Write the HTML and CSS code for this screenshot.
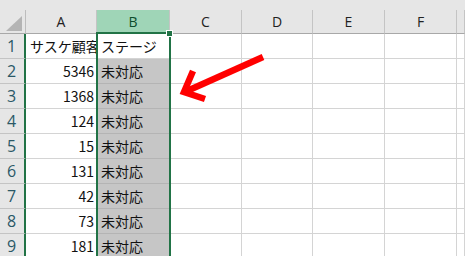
FILE: index.html
```html
<!DOCTYPE html>
<html lang="ja">
<head>
    <meta charset="UTF-8">
    <title>Sheet1</title>
    <link rel="stylesheet" href="styles.css">
</head>
<body>
    <div class="strip"></div>
    <div class="sheet">
        <div class="corner">
            <svg width="26" height="23" viewBox="0 0 26 23"><polygon points="6,21 22,21 22,6" fill="#b4b4b4"/></svg>
        </div>
        <div class="colhead">A</div>
        <div class="colhead sel">B</div>
        <div class="colhead">C</div>
        <div class="colhead">D</div>
        <div class="colhead">E</div>
        <div class="colhead">F</div>
        <div class="colhead"></div>

        <div class="rowhead">1</div>
        <div class="cell clip">サスケ顧客</div>
        <div class="cell active">ステージ</div>
        <div class="cell"></div><div class="cell"></div><div class="cell"></div><div class="cell"></div><div class="cell"></div>

        <div class="rowhead">2</div>
        <div class="cell num">5346</div>
        <div class="cell picked">未対応</div>
        <div class="cell"></div><div class="cell"></div><div class="cell"></div><div class="cell"></div><div class="cell"></div>

        <div class="rowhead">3</div>
        <div class="cell num">1368</div>
        <div class="cell picked">未対応</div>
        <div class="cell"></div><div class="cell"></div><div class="cell"></div><div class="cell"></div><div class="cell"></div>

        <div class="rowhead">4</div>
        <div class="cell num">124</div>
        <div class="cell picked">未対応</div>
        <div class="cell"></div><div class="cell"></div><div class="cell"></div><div class="cell"></div><div class="cell"></div>

        <div class="rowhead">5</div>
        <div class="cell num">15</div>
        <div class="cell picked">未対応</div>
        <div class="cell"></div><div class="cell"></div><div class="cell"></div><div class="cell"></div><div class="cell"></div>

        <div class="rowhead">6</div>
        <div class="cell num">131</div>
        <div class="cell picked">未対応</div>
        <div class="cell"></div><div class="cell"></div><div class="cell"></div><div class="cell"></div><div class="cell"></div>

        <div class="rowhead">7</div>
        <div class="cell num">42</div>
        <div class="cell picked">未対応</div>
        <div class="cell"></div><div class="cell"></div><div class="cell"></div><div class="cell"></div><div class="cell"></div>

        <div class="rowhead">8</div>
        <div class="cell num">73</div>
        <div class="cell picked">未対応</div>
        <div class="cell"></div><div class="cell"></div><div class="cell"></div><div class="cell"></div><div class="cell"></div>

        <div class="rowhead">9</div>
        <div class="cell num">181</div>
        <div class="cell picked">未対応</div>
        <div class="cell"></div><div class="cell"></div><div class="cell"></div><div class="cell"></div><div class="cell"></div>
    </div>

    <!-- column B selection frame -->
    <div class="selection"><div class="handle"></div></div>

    <svg class="arrow" width="465" height="256" viewBox="0 0 465 256">
        <line x1="263" y1="57" x2="187" y2="91" stroke="#ff0000" stroke-width="6.5"/>
        <polyline points="193,71 184,92 205,99" fill="none" stroke="#ff0000" stroke-width="6.5" stroke-linejoin="miter"/>
    </svg>
</body>
</html>
```

FILE: styles.css
```css
body {
    margin: 0;
    width: 465px;
    height: 256px;
    overflow: hidden;
    background: white;
    position: relative;
    font-family: "Noto Sans CJK JP", sans-serif;
    font-size: 14px;
    color: #111;
}
.strip {
    height: 10px;
    background: #e6e6e6;
}
.sheet {
    display: grid;
    grid-template-columns: 26px 71px 73px 72px 71px 72px 72px 1fr;
    grid-template-rows: 24px repeat(9, 25px);
    height: 246px;
    overflow: hidden;
}
.sheet > div {
    box-sizing: border-box;
    overflow: hidden;
    white-space: nowrap;
}
.corner {
    background: #e6e6e6;
    border-right: 1px solid #bdbdbd;
    border-bottom: 1px solid #a8a8a8;
}
.corner svg {
    display: block;
}
.colhead {
    background: #e6e6e6;
    border-right: 1px solid #c4c4c4;
    border-bottom: 1px solid #a8a8a8;
    font-family: "Open Sans", sans-serif;
    font-size: 14px;
    color: #222;
    text-align: center;
    line-height: 23px;
}
.colhead.sel {
    background: #9fd5b7;
    color: #0e4d2c;
}
.rowhead {
    background: #e6e6e6;
    border-right: 2px solid #217346;
    border-bottom: 1px solid #c4c4c4;
    font-family: "Open Sans", sans-serif;
    font-size: 16px;
    color: #2a5866;
    text-align: center;
    line-height: 25px;
    padding-right: 1px;
}
.cell {
    border-right: 1px solid #d4d4d4;
    border-bottom: 1px solid #d4d4d4;
    line-height: 25px;
    padding: 0 3px 0 4px;
}
.cell.num {
    text-align: right;
    padding-right: 2px;
}
.cell.clip {
    padding-left: 4px;
}
.cell.picked {
    background: #c6c6c6;
    border-bottom-color: #b4b4b4;
    padding-left: 4px;
}
.selection {
    position: absolute;
    left: 96px;
    top: 32px;
    width: 75px;
    height: 224px;
    box-sizing: border-box;
    border: 2px solid #217346;
    border-bottom: none;
}
.handle {
    position: absolute;
    right: -4px;
    top: -4px;
    width: 5px;
    height: 5px;
    background: #217346;
    border: 1px solid white;
}
.arrow {
    position: absolute;
    left: 0;
    top: 0;
}
```
